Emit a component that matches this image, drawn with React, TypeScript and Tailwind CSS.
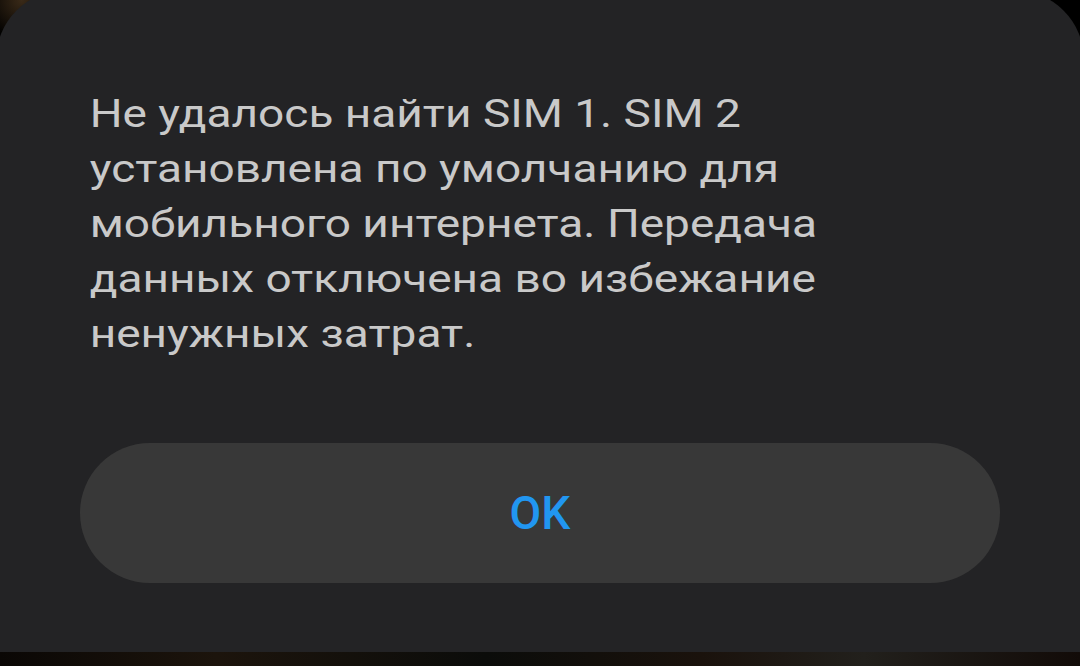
const lines = [
  'Не удалось найти SIM 1. SIM 2',
  'установлена по умолчанию для',
  'мобильного интернета. Передача',
  'данных отключена во избежание',
  'ненужных затрат.',
];

function SimDialog() {
  return (
    <div className="-mx-[4px] -mt-[10px] flex flex-1 flex-col rounded-t-[70px] bg-[#232325] px-[84px] pt-[97px]">
      <p className="origin-left scale-x-[1.21] pl-[8px] text-[38px] leading-[55px] text-[#c9c9c9]">
        {lines.map((line) => (
          <span key={line} className="block whitespace-nowrap">
            {line}
          </span>
        ))}
      </p>
      <button className="mt-[81px] h-[140px] w-full rounded-full bg-[#383838] text-[46px] font-medium text-[#2196f0]">
        OK
      </button>
    </div>
  );
}

export default function App() {
  return (
    <div
      className="flex h-[666px] w-[1080px] flex-col overflow-hidden bg-black bg-[radial-gradient(circle_at_2%_0%,#3a2a18_0,#000_40px),radial-gradient(circle_at_98%_0%,#4a3620_0,#000_40px)]"
      style={{ fontFamily: 'Roboto, "Noto Sans", sans-serif' }}
    >
      <SimDialog />
      <div className="h-[14px] bg-[linear-gradient(90deg,#0a0705_0%,#1c140c_20%,#0b0c0a_45%,#1a120c_65%,#22201c_80%,#120b08_100%)]" />
    </div>
  );
}
